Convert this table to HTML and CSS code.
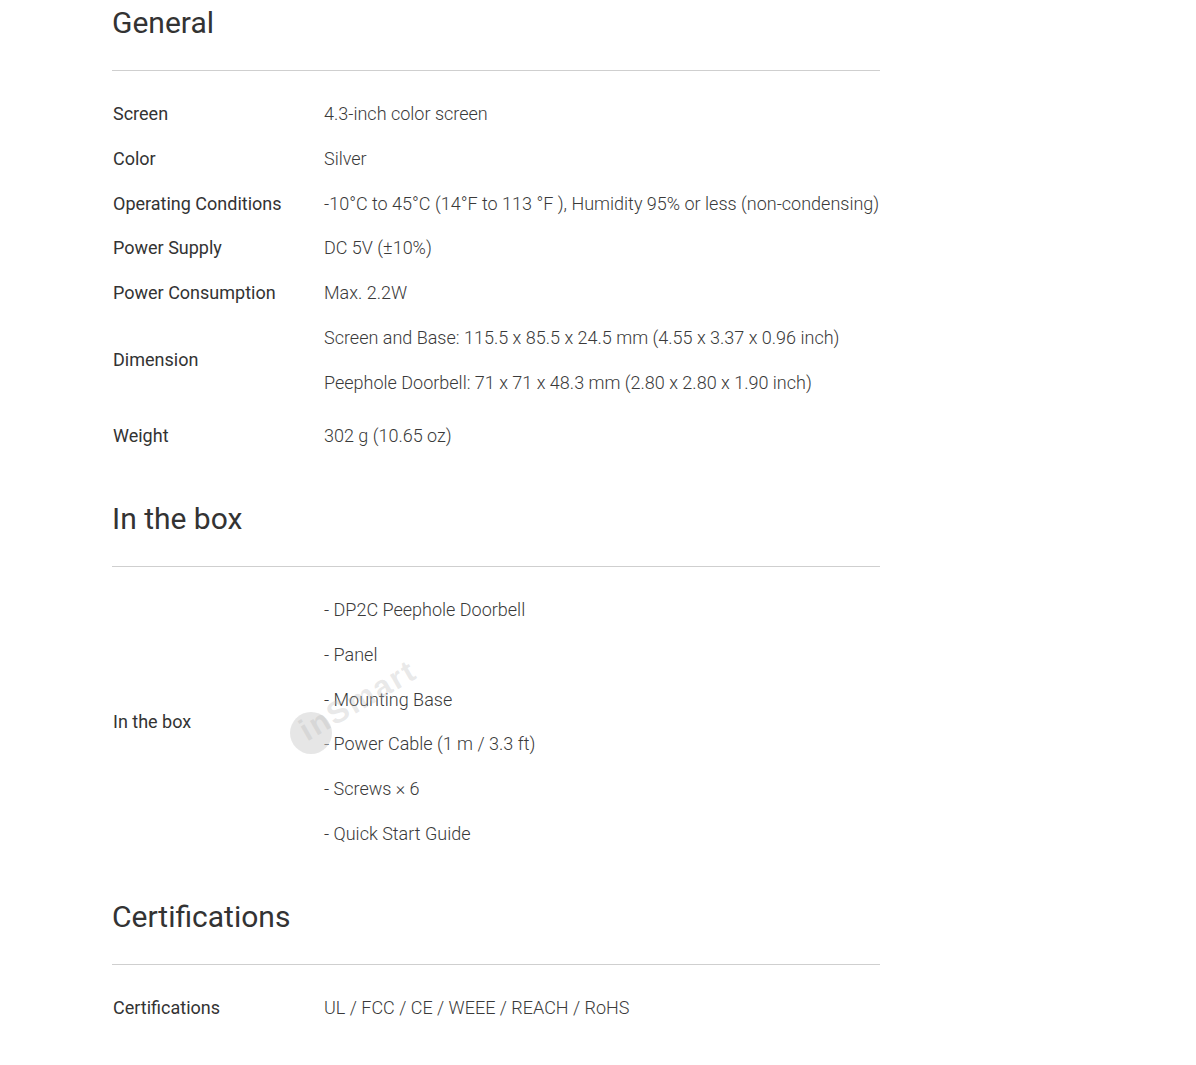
FILE: index.html
```html
<!DOCTYPE html>
<html lang="en">
<head>
<meta charset="utf-8">
<title>Specs</title>
<link rel="stylesheet" href="styles.css">
</head>
<body>
<main class="specs">
  <section class="sec">
    <h2 class="sec-title">General</h2>
    <hr class="rule">
    <div class="rows">
      <div class="row"><div class="label">Screen</div><div class="value"><p>4.3-inch color screen</p></div></div>
      <div class="row"><div class="label">Color</div><div class="value"><p>Silver</p></div></div>
      <div class="row"><div class="label">Operating Conditions</div><div class="value"><p>-10°C to 45°C (14°F to 113 °F ), Humidity 95% or less (non-condensing)</p></div></div>
      <div class="row"><div class="label">Power Supply</div><div class="value"><p>DC 5V (±10%)</p></div></div>
      <div class="row"><div class="label">Power Consumption</div><div class="value"><p>Max. 2.2W</p></div></div>
      <div class="row row-multi"><div class="label">Dimension</div><div class="value"><p>Screen and Base: 115.5 x 85.5 x 24.5 mm (4.55 x 3.37 x 0.96 inch)</p><p>Peephole Doorbell: 71 x 71 x 48.3 mm (2.80 x 2.80 x 1.90 inch)</p></div></div>
      <div class="row"><div class="label">Weight</div><div class="value"><p>302 g (10.65 oz)</p></div></div>
    </div>
  </section>
  <section class="sec">
    <h2 class="sec-title">In the box</h2>
    <hr class="rule">
    <div class="rows">
      <div class="row row-box"><div class="label">In the box</div><div class="value"><p>- DP2C Peephole Doorbell</p><p>- Panel</p><p>- Mounting Base</p><p>- Power Cable (1 m / 3.3 ft)</p><p>- Screws × 6</p><p>- Quick Start Guide</p></div>
        <div class="watermark" aria-hidden="true"><span class="wm-dot"></span><span class="wm-text">inSmart</span></div>
      </div>
    </div>
  </section>
  <section class="sec">
    <h2 class="sec-title">Certifications</h2>
    <hr class="rule">
    <div class="rows">
      <div class="row"><div class="label">Certifications</div><div class="value"><p>UL / FCC / CE / WEEE / REACH / RoHS</p></div></div>
    </div>
  </section>
</main>
</body>
</html>
```
FILE: styles.css
```css
html, body {
  margin: 0;
  padding: 0;
  background: #ffffff;
}
body {
  font-family: Roboto, "Liberation Sans", Arial, sans-serif;
  color: #333333;
}
.specs {
  width: 768px;
  margin-left: 112px;
}
.sec {
  margin-top: 38px;
}
.sec:first-child {
  margin-top: 0;
}
.sec-title {
  margin: 0;
  font-size: 30px;
  font-weight: 400;
  line-height: 44px;
  color: #333333;
}
.sec:first-child .sec-title {
  margin-top: 1px;
}
.rule {
  margin: 25px 0 0 0;
  border: 0;
  border-top: 1px solid #cfcfcf;
  height: 0;
}
.rows {
  padding-top: 21px;
}
.row {
  display: grid;
  grid-template-columns: 212px 1fr;
  align-items: center;
  position: relative;
}
.label {
  font-size: 18px;
  line-height: 44.75px;
  color: #333333;
  padding-left: 1px;
}
.value {
  font-size: 18px;
  line-height: 44.75px;
  font-weight: 300;
  color: #3a3a3a;
}
.value p {
  margin: 0;
}
.row-multi .value,
.row-multi .label {
  padding-bottom: 9px;
}
.watermark {
  position: absolute;
  left: 178px;
  top: 100px;
  width: 150px;
  height: 80px;
  pointer-events: none;
}
.wm-dot {
  position: absolute;
  left: 0;
  top: 24px;
  width: 42px;
  height: 42px;
  border-radius: 50%;
  background: rgba(205, 205, 205, 0.5);
}
.wm-text {
  position: absolute;
  left: 12px;
  top: 30px;
  font-size: 31px;
  line-height: 30px;
  font-weight: 900;
  letter-spacing: 2px;
  color: rgba(185, 185, 185, 0.32);
  transform: rotate(-30deg);
  transform-origin: left center;
  font-family: "Liberation Sans", Arial, sans-serif;
  white-space: nowrap;
}
```
